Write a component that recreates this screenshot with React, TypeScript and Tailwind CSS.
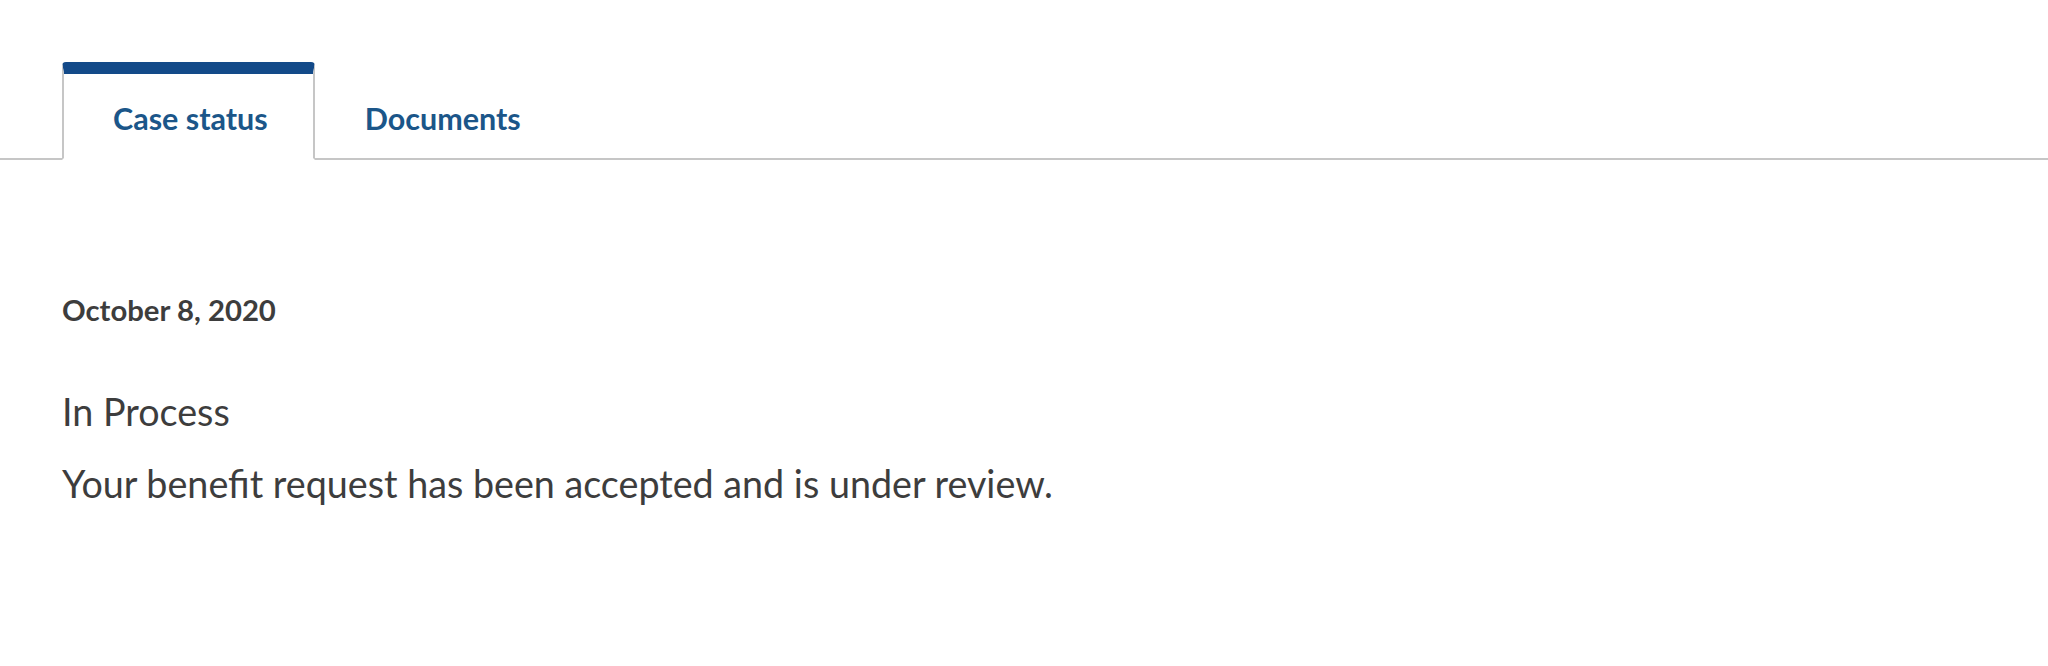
import { useState } from 'react'

const tabs = ['Case status', 'Documents']

export default function App() {
  const [active, setActive] = useState(0)

  return (
    <div className="min-h-screen bg-white font-['Lato',sans-serif] text-[#3d3d3d]">
      <div className="flex border-b-2 border-[#c6c6c6] pt-[62px]">
        <div className="w-[62px]" />
        {tabs.map((tab, i) =>
          i === active ? (
            <button
              key={tab}
              onClick={() => setActive(i)}
              className="-mb-[2px] h-[98px] rounded-t-[4px] border-x-2 border-t-[12px] border-b-2 border-x-[#c6c6c6] border-t-[#134a89] border-b-white bg-white pl-[49px] pr-[45px] pt-[3px] text-[30.5px] font-bold leading-[40px] text-[#1b5689]"
            >
              {tab}
            </button>
          ) : (
            <button
              key={tab}
              onClick={() => setActive(i)}
              className="h-[96px] px-[50px] pt-[15px] text-[30.5px] font-bold leading-[40px] text-[#1b5689]"
            >
              {tab}
            </button>
          )
        )}
      </div>

      <div className="px-[62px] pt-[130px]">
        <p className="text-[29.3px] font-bold leading-[40px]">October 8, 2020</p>
        <p className="mt-[54px] text-[37.7px] leading-[56px]">In Process</p>
        <p className="mt-[16px] text-[37.7px] leading-[56px]">
          Your benefit request has been accepted and is under review.
        </p>
      </div>
    </div>
  )
}
